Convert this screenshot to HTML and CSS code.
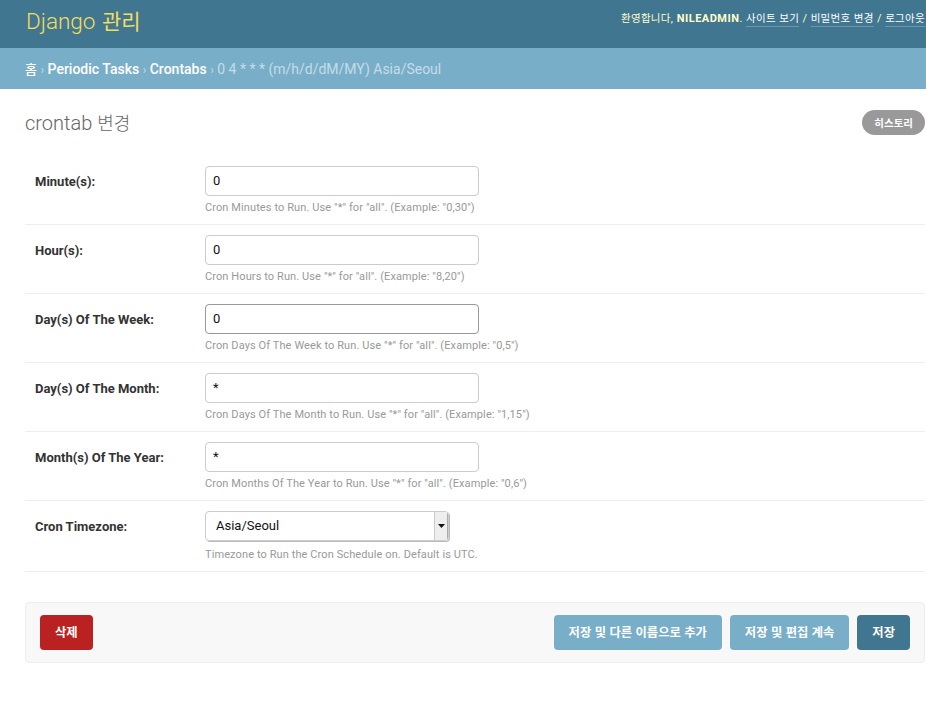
FILE: index.html
```html
<!DOCTYPE html>
<html lang="ko">
<head>
<meta charset="utf-8">
<title>crontab 변경 | Django 관리</title>
<link rel="stylesheet" href="styles.css">
</head>
<body>
<div class="header">
  <h1 class="branding">Django <span class="ko">관리</span></h1>
  <div class="user-tools">
    <span class="ko">환영합니다</span>, <strong>NILEADMIN</strong>.
    <a href="#" class="ko">사이트 보기</a> /
    <a href="#" class="ko">비밀번호 변경</a> /
    <a href="#" class="ko">로그아웃</a>
  </div>
</div>
<div class="breadcrumbs">
  <a href="#" class="ko">홈</a> <span class="sep">›</span> <a href="#">Periodic Tasks</a> <span class="sep">›</span> <a href="#">Crontabs</a> <span class="sep">›</span> 0 4 * * * (m/h/d/dM/MY) Asia/Seoul
</div>
<div class="content">
  <div class="title-row">
    <h1 class="title">crontab <span class="ko">변경</span></h1>
    <a href="#" class="history ko">히스토리</a>
  </div>
  <form class="form">
    <div class="form-row">
      <label class="label">Minute(s):</label>
      <div class="field">
        <div class="input">0</div>
        <p class="help">Cron Minutes to Run. Use "*" for "all". (Example: "0,30")</p>
      </div>
    </div>
    <div class="form-row">
      <label class="label">Hour(s):</label>
      <div class="field">
        <div class="input">0</div>
        <p class="help">Cron Hours to Run. Use "*" for "all". (Example: "8,20")</p>
      </div>
    </div>
    <div class="form-row">
      <label class="label">Day(s) Of The Week:</label>
      <div class="field">
        <div class="input focus">0</div>
        <p class="help">Cron Days Of The Week to Run. Use "*" for "all". (Example: "0,5")</p>
      </div>
    </div>
    <div class="form-row">
      <label class="label">Day(s) Of The Month:</label>
      <div class="field">
        <div class="input">*</div>
        <p class="help">Cron Days Of The Month to Run. Use "*" for "all". (Example: "1,15")</p>
      </div>
    </div>
    <div class="form-row">
      <label class="label">Month(s) Of The Year:</label>
      <div class="field">
        <div class="input">*</div>
        <p class="help">Cron Months Of The Year to Run. Use "*" for "all". (Example: "0,6")</p>
      </div>
    </div>
    <div class="form-row">
      <label class="label">Cron Timezone:</label>
      <div class="field">
        <div class="select">
          <span class="select-value">Asia/Seoul</span>
          <span class="select-arrow"><svg width="7" height="4" viewBox="0 0 7 4"><path d="M0 0H7L3.5 4Z" fill="#111"/></svg></span>
        </div>
        <p class="help help-select">Timezone to Run the Cron Schedule on. Default is UTC.</p>
      </div>
    </div>
    <div class="submit-row">
      <a href="#" class="btn delete ko">삭제</a>
      <div class="spacer"></div>
      <a href="#" class="btn light ko">저장 및 다른 이름으로 추가</a>
      <a href="#" class="btn light ko">저장 및 편집 계속</a>
      <a href="#" class="btn save ko">저장</a>
    </div>
  </form>
</div>
</body>
</html>
```
FILE: styles.css
```css
html, body {
  margin: 0;
  padding: 0;
  background: #fff;
}
body {
  font-family: Roboto, "Noto Sans CJK KR", sans-serif;
  font-size: 14px;
  color: #333;
  overflow: hidden;
}
a { text-decoration: none; color: inherit; }
.ko { font-family: "Noto Sans CJK KR", Roboto, sans-serif; }

.header {
  background: #417690;
  height: 48px;
  display: flex;
  justify-content: space-between;
  align-items: flex-start;
  padding: 0 1px 0 26px;
  box-sizing: border-box;
}
.branding {
  margin: 0;
  padding-top: 5px;
  font-size: 22.5px;
  font-weight: 300;
  color: #f5dd5d;
  line-height: 30px;
  white-space: nowrap;
}
.branding .ko { font-size: 21px; font-weight: 400; margin-left: 1px; }
.user-tools {
  padding-top: 11px;
  font-size: 11px;
  line-height: 14px;
  letter-spacing: 0.5px;
  color: #ffc;
  white-space: nowrap;
}
.user-tools strong { font-weight: 700; }
.user-tools .ko { font-size: 10.5px; letter-spacing: 0.3px; }
.user-tools a {
  color: #fff;
  border-bottom: 1px solid rgba(255,255,255,0.25);
  padding-bottom: 1px;
}

.breadcrumbs {
  background: #79aec8;
  height: 41px;
  line-height: 41px;
  padding: 0 25px;
  font-size: 14px;
  color: #c4dce8;
  white-space: nowrap;
}
.breadcrumbs a { color: #fff; font-weight: 500; }
.breadcrumbs .ko { font-size: 13px; }
.breadcrumbs .sep { font-size: 12px; }

.content {
  padding: 0 1px 0 25px;
}
.title-row {
  display: flex;
  justify-content: space-between;
  align-items: center;
  margin-top: 20px;
  height: 26px;
}
.title {
  margin: 0;
  font-size: 20px;
  font-weight: 300;
  color: #666;
}
.title .ko { font-size: 18px; }
.history {
  background: #999;
  color: #fff;
  font-size: 10.5px;
  font-weight: 700;
  height: 25px;
  line-height: 25px;
  padding: 0 12px;
  border-radius: 13px;
}

.form { margin-top: 20px; }
.form-row {
  display: flex;
  padding: 11px 10px 9px;
  border-bottom: 1px solid #eee;
}
.form-row + .form-row { padding-top: 10px; }
.label {
  width: 170px;
  flex: none;
  font-size: 13px;
  font-weight: 700;
  color: #333;
  padding-top: 8px;
  line-height: 16px;
}
.field { display: flex; flex-direction: column; }
.input {
  width: 274px;
  height: 30px;
  box-sizing: border-box;
  border: 1px solid #ccc;
  border-radius: 4px;
  padding: 0 7px;
  font-size: 13px;
  line-height: 28px;
  color: #111;
}
.input.focus { border-color: #999; }
.help {
  margin: 5px 0 0;
  font-size: 11px;
  line-height: 14px;
  letter-spacing: 0.1px;
  color: #999;
}
.help-select { margin-top: 7px; }
.select {
  width: 244px;
  height: 30px;
  box-sizing: border-box;
  border: 1px solid #ccc;
  border-radius: 4px;
  display: flex;
  overflow: hidden;
  box-shadow: 1px 1px 0 #bbb;
}
.select-value {
  flex: 1;
  padding-left: 10px;
  font-size: 13px;
  line-height: 28px;
  color: #111;
}
.select-arrow {
  width: 12px;
  background: #eee;
  border-left: 1px solid #ccc;
  border-right: 1px solid #aaa;
  display: flex;
  align-items: center;
  justify-content: center;
}
.select-arrow svg { display: block; margin-left: 1px; }

.submit-row {
  margin-top: 30px;
  display: flex;
  align-items: center;
  gap: 8px;
  padding: 12px 14px;
  background: #f8f8f8;
  border: 1px solid #eee;
  border-radius: 4px;
}
.spacer { flex: 1; }
.btn {
  height: 35px;
  line-height: 35px;
  padding: 0 15px;
  border-radius: 4px;
  font-size: 12.3px;
  font-weight: 700;
  color: #fff;
  white-space: nowrap;
}
.delete { background: #ba2121; }
.light { background: #79aec8; }
.save { background: #417690; }
```
